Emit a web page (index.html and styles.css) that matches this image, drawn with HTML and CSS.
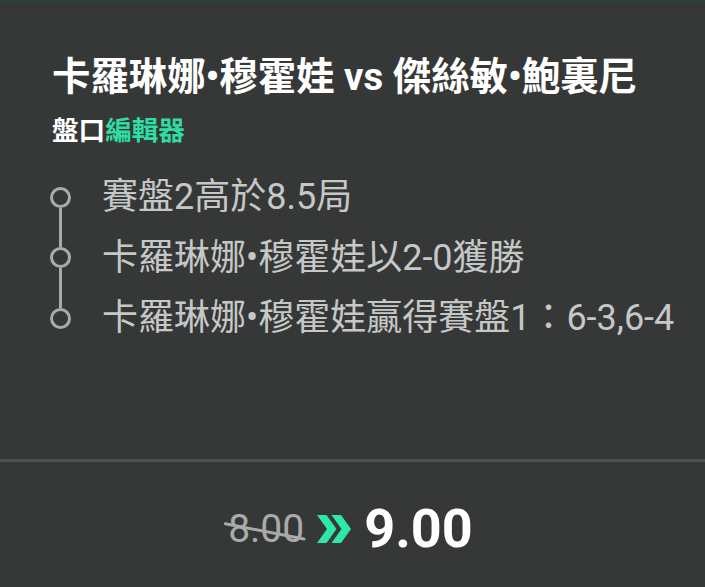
FILE: index.html
```html
<!DOCTYPE html>
<html lang="zh-Hant">
<head>
<meta charset="utf-8">
<title>盤口編輯器</title>
<link rel="stylesheet" href="styles.css">
</head>
<body>
<div class="card">
  <div class="top">
    <h1 class="title">卡羅琳娜•穆霍娃 vs 傑絲敏•鮑裏尼</h1>
    <div class="subtitle">盤口<span class="accent">編輯器</span></div>
    <ul class="legs">
      <li class="leg">
        <span class="marker"><span class="seg none"></span><span class="dot"></span><span class="seg"></span></span>
        <span class="leg-text">賽盤2高於8.5局</span>
      </li>
      <li class="leg">
        <span class="marker"><span class="seg"></span><span class="dot"></span><span class="seg"></span></span>
        <span class="leg-text">卡羅琳娜•穆霍娃以2-0獲勝</span>
      </li>
      <li class="leg">
        <span class="marker"><span class="seg"></span><span class="dot"></span><span class="seg none"></span></span>
        <span class="leg-text">卡羅琳娜•穆霍娃贏得賽盤1：6-3,6-4</span>
      </li>
    </ul>
  </div>
  <div class="bottom">
    <span class="old-odds">8.00</span>
    <svg class="chevrons" width="34" height="28" viewBox="0 0 34 28" aria-hidden="true">
      <path d="M0 0H9.5L19.5 14L9.5 28H0L10 14Z M14.5 0H24L34 14L24 28H14.5L24.5 14Z" fill="#2ee8ab"/>
    </svg>
    <span class="new-odds">9.00</span>
  </div>
</div>
</body>
</html>
```

FILE: styles.css
```css
* { box-sizing: border-box; }
html, body {
  margin: 0;
  padding: 0;
  background: #363838;
}
body {
  width: 705px;
  height: 587px;
  overflow: hidden;
  font-family: Roboto, "Noto Sans CJK TC", sans-serif;
}
.card {
  height: 587px;
  display: flex;
  flex-direction: column;
  border-top: 2px solid #264438;
  background: #363838;
}
.top {
  height: 460px;
  padding: 52px 0 0 52px;
  border-bottom: 3px solid #4e5050;
}
.title {
  margin: 0;
  font-size: 38.4px;
  line-height: 46px;
  font-weight: 700;
  color: #ffffff;
  white-space: nowrap;
}
.subtitle {
  margin-top: 15px;
  font-size: 26.6px;
  line-height: 32px;
  font-weight: 700;
  color: #ffffff;
}
.accent { color: #2fdca4; }
.legs {
  list-style: none;
  margin: 20px 0 0 -2px;
  padding: 0;
}
.leg {
  display: flex;
  align-items: center;
  height: 60.5px;
  gap: 31px;
}
.marker {
  display: flex;
  flex-direction: column;
  align-items: center;
  width: 21px;
  height: 60.5px;
  flex: none;
}
.seg {
  flex: 1;
  width: 3px;
  background: #a9abab;
}
.seg.none { background: transparent; }
.dot {
  width: 21px;
  height: 21px;
  border: 3px solid #a9abab;
  border-radius: 50%;
  flex: none;
}
.leg-text {
  font-size: 36px;
  line-height: 44px;
  color: #c6c7c7;
  white-space: nowrap;
}
.bottom {
  flex: 1;
  display: flex;
  align-items: center;
  justify-content: center;
  gap: 13px;
  padding: 8px 4px 0 0;
}
.old-odds {
  position: relative;
  font-size: 39px;
  line-height: 44px;
  color: #a9abab;
}
.old-odds::after {
  content: "";
  position: absolute;
  left: -4px;
  width: 83px;
  top: 15px;
  height: 3px;
  background: #a9abab;
  transform-origin: 0 50%;
  transform: rotate(11deg);
  border-radius: 2px;
}
.chevrons { flex: none; }
.new-odds {
  font-size: 54px;
  line-height: 64px;
  font-weight: 700;
  color: #ffffff;
}
```
